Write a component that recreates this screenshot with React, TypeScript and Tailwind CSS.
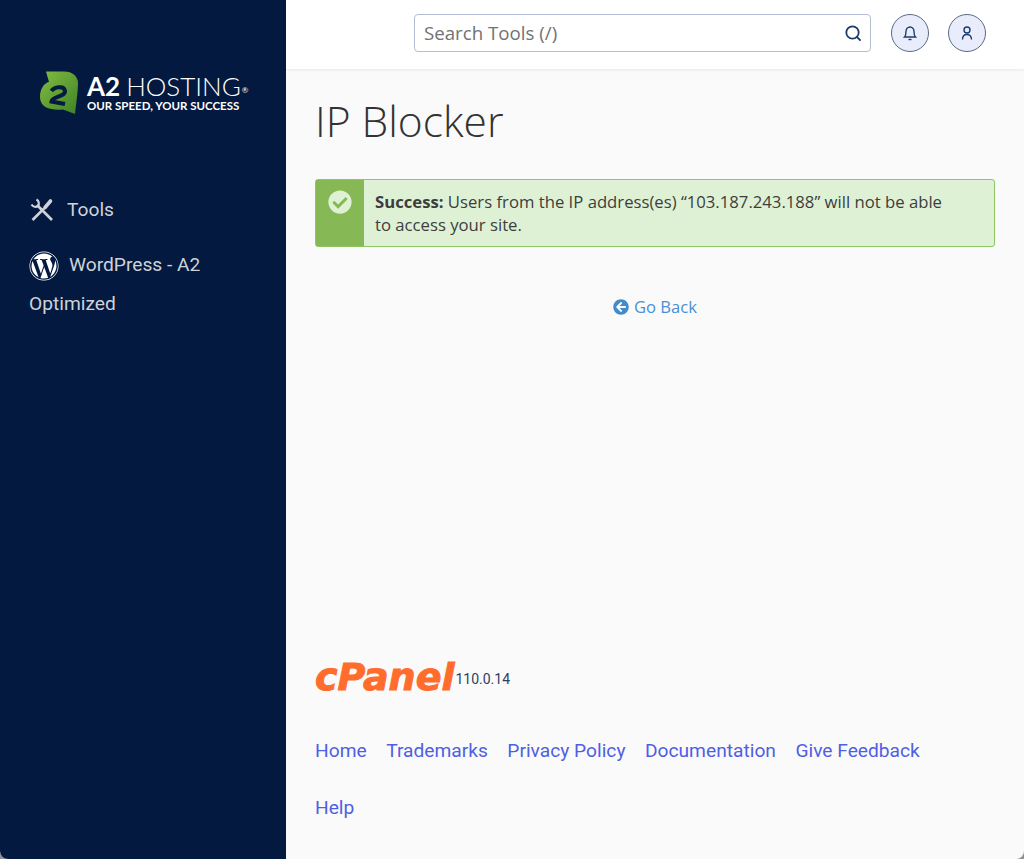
import { FaArrowCircleLeft, FaCheckCircle, FaWordpress } from 'react-icons/fa';

const footerLinks = ['Home', 'Trademarks', 'Privacy Policy', 'Documentation', 'Give Feedback', 'Help'];

function A2Mark() {
  return (
    <svg width="40" height="45" viewBox="0 0 40 45" className="shrink-0">
      <defs>
        <linearGradient id="a2green" x1="0" y1="0" x2="1" y2="1">
          <stop offset="0" stopColor="#82bd40" />
          <stop offset="1" stopColor="#3f8128" />
        </linearGradient>
      </defs>
      <path
        d="M7 1.500H24C33 1 39 6 39 13C39 23 37 33 36 44L24 39.500C12 40.500 1 38 1 27C1 19 5 13 10 12Z"
        fill="url(#a2green)"
      />
      <path
        d="M12.500 21C15 17 25 15 26 21C26.500 27 13 26 12.500 31.500L26 34"
        fill="none"
        stroke="#041a40"
        strokeWidth="4"
      />
    </svg>
  );
}

function ToolsIcon() {
  return (
    <svg width="26" height="26" viewBox="0 0 26 26" fill="none" stroke="currentColor" strokeWidth="2.600">
      <path d="M8 8 23 23" />
      <path d="M7.500 2.500C10 4 10.500 7 9 9C7 10.500 4 10 2.500 7.500" strokeWidth="2.200" />
      <path d="M3.500 23 15 11.500" />
      <path d="M16 10.500 21.500 4" strokeWidth="3.600" strokeLinecap="round" />
    </svg>
  );
}

function SearchIcon() {
  return (
    <svg width="18" height="18" viewBox="0 0 18 18" fill="none" stroke="#1c3b6d" strokeWidth="1.800">
      <circle cx="8.500" cy="8.500" r="6.200" />
      <path d="M12.800 12.800 16 16" strokeLinecap="round" />
    </svg>
  );
}

function BellIcon() {
  return (
    <svg width="16" height="16" viewBox="0 0 16 16" fill="none" stroke="#1c3b6d" strokeWidth="1.400">
      <path d="M2.500 12H13.500C12 10.500 12 9.500 12 6.500C12 4 10.200 2 8 2C5.800 2 4 4 4 6.500C4 9.500 4 10.500 2.500 12Z" />
      <path d="M6.500 14.500H9.500" />
    </svg>
  );
}

function UserIcon() {
  return (
    <svg width="16" height="16" viewBox="0 0 16 16" fill="none" stroke="#1c3b6d" strokeWidth="1.400">
      <circle cx="8" cy="5" r="3" />
      <path d="M3.500 14.500C3.500 11 5.500 9.500 8 9.500C10.500 9.500 12.500 11 12.500 14.500" />
    </svg>
  );
}

export default function App() {
  return (
    <div className="h-[859px] w-[1024px] bg-[#8e9196]">
      <div className="flex h-full w-full overflow-hidden rounded-b-[8px] bg-[#fafafa] font-['Open_Sans',sans-serif]">
        <aside className="w-[286px] shrink-0 bg-[#03193f] font-['Roboto',sans-serif] text-[19.200px] text-[#cfd2d8]">
          <div className="flex pl-[39px] pt-[70px]">
            <A2Mark />
            <div className="ml-[8px] mt-[2px] text-white">
              <div className="flex items-start font-['Lato',sans-serif] text-[26px] leading-[28px] whitespace-nowrap">
                <span className="font-bold">A2</span>
                <span className="ml-[6px] font-light">HOSTING</span>
                <span className="ml-[1px] mt-[13px] text-[8px] leading-[10px]">®</span>
              </div>
              <div className="font-['Lato',sans-serif] text-[11.500px] font-bold leading-[12px] whitespace-nowrap">
                OUR SPEED, YOUR SUCCESS
              </div>
            </div>
          </div>
          <nav className="mt-[81px] pl-[29px] pr-[29px]">
            <a className="flex items-center">
              <ToolsIcon />
              <span className="ml-[12px]">Tools</span>
            </a>
            <a className="mt-[20px] block leading-[39px]">
              <FaWordpress className="mr-[10px] inline-block align-middle text-[30px] text-white" />
              WordPress - A2 Optimized
            </a>
          </nav>
        </aside>

        <div className="flex min-w-0 flex-1 flex-col">
          <header className="flex h-[69px] items-start bg-white pl-[128px] pt-[14px] shadow-[0_1px_3px_rgba(0,0,0,0.08)]">
            <div className="flex h-[38px] w-[457px] items-center justify-between rounded-[4px] border border-[#b4bdd2] pl-[9px] pr-[8px] text-[18.700px] text-[#6f7276]">
              <span className="pt-[1px]">Search Tools (/)</span>
              <SearchIcon />
            </div>
            <button className="ml-[20px] flex h-[38px] w-[38px] items-center justify-center rounded-full border border-[#5c6a86] bg-[#e9edfb]">
              <BellIcon />
            </button>
            <button className="ml-[19px] flex h-[38px] w-[38px] items-center justify-center rounded-full border border-[#5c6a86] bg-[#e9edfb]">
              <UserIcon />
            </button>
          </header>

          <main className="px-[29px]">
            <h1 className="mt-[23px] text-[42.500px] font-light leading-[58px] text-[#333]">IP Blocker</h1>

            <div className="mt-[29px] flex h-[68px] rounded-[3px] border border-[#8fc566] bg-[#dff1d5]">
              <div className="flex w-[48px] shrink-0 justify-center bg-[#86b955] pt-[10px]">
                <FaCheckCircle className="text-[24px] text-[#dff1d5]" />
              </div>
              <p className="w-[590px] pl-[11px] pt-[10px] text-[16.700px] leading-[23px] text-[#3d3d3d]">
                <strong>Success:</strong> Users from the IP address(es) “103.187.243.188” will not be able to access your site.
              </p>
            </div>

            <div className="mt-[49px] flex items-center justify-center text-[16.600px] leading-[22px] text-[#4a90d2]">
              <FaArrowCircleLeft className="mr-[5px] text-[16px] text-[#428bca]" />
              Go Back
            </div>

            <div className="mt-[338px] flex items-end">
              <span className="font-['DejaVu_Sans',sans-serif] text-[38px] font-bold italic leading-[42px] text-[#ff6c2c] [-webkit-text-stroke:1px_#ff6c2c]">
                cPanel
              </span>
              <span className="ml-[1px] pb-[10px] font-['Roboto',sans-serif] text-[14px] leading-[18px] text-[#2c3f63]">
                110.0.14
              </span>
            </div>

            <div className="mt-[24px] flex w-[640px] flex-wrap gap-x-[19.500px] font-['Roboto',sans-serif] text-[19.200px] leading-[57px] text-[#4f5fe3]">
              {footerLinks.map((link) => (
                <a key={link}>{link}</a>
              ))}
            </div>
          </main>
        </div>
      </div>
    </div>
  );
}
